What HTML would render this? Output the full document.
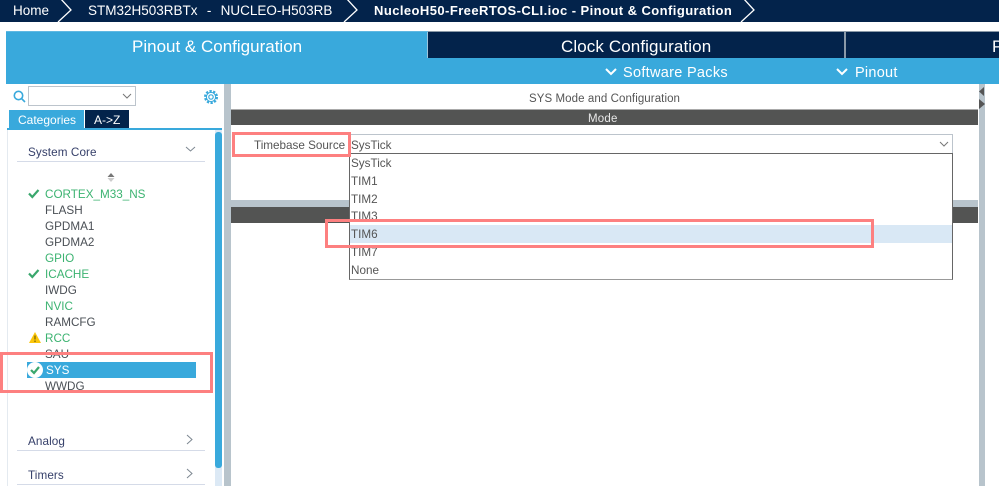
<!DOCTYPE html>
<html><head><meta charset="utf-8"><style>
html,body{margin:0;padding:0;background:#fff}
body{width:999px;height:486px;overflow:hidden;position:relative;font-family:"Liberation Sans",sans-serif}
#w{position:absolute;left:0;top:0;width:999px;height:486px;overflow:hidden;filter:blur(.3px)}
.a{position:absolute}
.t{position:absolute;white-space:nowrap;line-height:16px}
.l{position:absolute;left:45px;font-size:11.7px;line-height:16px;color:#4a4f55;white-space:nowrap}
.g{color:#3cb371}
.o{position:absolute;left:351px;font-size:11.7px;line-height:18px;color:#555;white-space:nowrap}
.r{position:absolute;border:3px solid #fd8080;box-sizing:border-box}
.h{font-size:11.7px;color:#36406a;letter-spacing:.1px}
svg{position:absolute;overflow:visible}
</style></head><body><div id="w">
<div class="a" style="left:0;top:0;width:999px;height:22px;background:#03234b"></div>
<div class="t" style="left:13px;top:3px;font-size:13.5px;color:#fff">Home</div>
<div class="t" style="left:88px;top:3px;font-size:13.5px;color:#fff;word-spacing:.9px">STM32H503RBTx&nbsp; -&nbsp; NUCLEO-H503RB</div>
<div class="t" style="left:374px;top:3px;font-size:13px;color:#fff;font-weight:bold;letter-spacing:.43px">NucleoH50-FreeRTOS-CLI.ioc - Pinout &amp; Configuration</div>
<svg style="left:0;top:0" width="999" height="24" fill="none" stroke="#fff" stroke-width="1.3"><path d="M58 22L71 10L60 -2"/><path d="M344 22L357 10L346 -2"/><path d="M741 22L754 10L743 -2"/></svg>

<div class="a" style="left:6px;top:31px;width:993px;height:53px;background:#39a9dc"></div>
<div class="a" style="left:428px;top:31px;width:571px;height:27px;background:#03234b;border-top:1px solid #8a99a8;box-sizing:border-box"></div>
<div class="a" style="left:427px;top:31px;width:1px;height:27px;background:#9fc6dc"></div>
<div class="a" style="left:844px;top:31px;width:2px;height:27px;background:#8a99a8"></div>
<div class="a" style="left:6px;top:31px;width:422px;height:1px;background:#5fb8e2"></div>
<div class="t" style="left:132px;top:39px;font-size:17px;color:#fff">Pinout &amp; Configuration</div>
<div class="t" style="left:561px;top:39px;font-size:17px;letter-spacing:.1px;color:#fff">Clock Configuration</div>
<div class="t" style="left:992px;top:39px;font-size:17px;color:#fff">P</div>
<div class="t" style="left:623px;top:65px;font-size:14.5px;color:#fff;letter-spacing:.3px">Software Packs</div>
<div class="t" style="left:855px;top:65px;font-size:14.5px;color:#fff;letter-spacing:.25px">Pinout</div>
<svg style="left:0;top:0" width="999" height="90" fill="none" stroke="#fff" stroke-width="2"><path d="M606 69L611 74L616 69"/><path d="M837 69L842 74L847 69"/></svg>

<!-- left panel -->
<svg style="left:13px;top:90px" width="14" height="14" fill="none" stroke="#39a9dc" stroke-width="1.6"><circle cx="5.5" cy="5.5" r="4.2"/><path d="M8.5 8.5L12 12"/></svg>
<div class="a" style="left:28px;top:86px;width:108px;height:20px;border:1px solid #bcc4cc;box-sizing:border-box"></div>
<svg style="left:122px;top:93px" width="12" height="8" fill="none" stroke="#777" stroke-width="1"><path d="M1 1L5 5L9 1"/></svg>
<svg style="left:203px;top:89px" width="16" height="16" fill="none" stroke="#39a9dc"><circle cx="8" cy="8" r="5.7" stroke-width="2.6" stroke-dasharray="2.2 1.4"/><circle cx="8" cy="8" r="4.6" stroke-width="1"/><circle cx="8" cy="8" r="2.2" stroke-width="1.2"/></svg>
<div class="a" style="left:9px;top:110px;width:75px;height:18px;background:#39a9dc"></div>
<div class="a" style="left:85px;top:110px;width:44px;height:18px;background:#03234b"></div>
<div class="t" style="left:18px;top:112px;font-size:12px;color:#fff">Categories</div>
<div class="t" style="left:94px;top:112px;font-size:12px;color:#fff">A-&gt;Z</div>
<div class="a" style="left:7px;top:128px;width:215px;height:2px;background:#39a9dc"></div>
<div class="a" style="left:7px;top:130px;width:1px;height:356px;background:#e4eaf0"></div>
<div class="t h" style="left:28px;top:145px">System Core</div>
<svg style="left:185px;top:146px" width="12" height="8" fill="none" stroke="#7d8791" stroke-width="1"><path d="M1 1L5.5 5L10 1"/></svg>
<div class="a" style="left:17px;top:161px;width:188px;height:1px;background:#d5dbe8"></div>
<svg style="left:107px;top:173px" width="8" height="10"><path d="M4 0L7.5 4H.5Z" fill="#777"/><path d="M4 9L7.5 5H.5Z" fill="#ccc"/></svg>
<svg style="left:28px;top:188px" width="12" height="12" fill="none" stroke="#3aa76d" stroke-width="2.2"><path d="M1 5.5L4.3 9L10.5 2"/></svg>
<svg style="left:28px;top:268px" width="12" height="12" fill="none" stroke="#3aa76d" stroke-width="2.2"><path d="M1 5.5L4.3 9L10.5 2"/></svg>
<div class="l g" style="top:187px">CORTEX_M33_NS</div>
<div class="l" style="top:203px">FLASH</div>
<div class="l" style="top:219px">GPDMA1</div>
<div class="l" style="top:235px">GPDMA2</div>
<div class="l g" style="top:251px">GPIO</div>
<div class="l g" style="top:267px">ICACHE</div>
<div class="l" style="top:283px">IWDG</div>
<div class="l g" style="top:299px">NVIC</div>
<div class="l" style="top:315px">RAMCFG</div>
<svg style="left:29px;top:332px" width="12" height="11"><path d="M6 0L12 11H0Z" fill="#fbc60a"/><path d="M6 3.5V7.5M6 8.5V10" stroke="#5a4a00" stroke-width="1"/></svg>
<div class="l g" style="top:331px">RCC</div>
<div class="l" style="top:347px">SAU</div>
<div class="a" style="left:27px;top:362px;width:169px;height:16px;background:#39a9dc"></div>
<svg style="left:27px;top:362px" width="16" height="16" fill="none"><circle cx="8" cy="8" r="8" fill="#fff"/><path d="M4 8L7 11L12 5" stroke="#3aa76d" stroke-width="2.2"/></svg>
<div class="l" style="top:363px;left:46px;color:#fff">SYS</div>
<div class="l" style="top:379px">WWDG</div>
<div class="t h" style="left:28px;top:434px">Analog</div>
<svg style="left:186px;top:434px" width="8" height="12" fill="none" stroke="#7d8791" stroke-width="1"><path d="M1 1L6 5.5L1 10"/></svg>
<div class="a" style="left:17px;top:450px;width:188px;height:1px;background:#d5dbe8"></div>
<div class="t h" style="left:28px;top:468px">Timers</div>
<svg style="left:186px;top:468px" width="8" height="12" fill="none" stroke="#7d8791" stroke-width="1"><path d="M1 1L6 5.5L1 10"/></svg>
<div class="a" style="left:17px;top:484px;width:188px;height:1px;background:#d5dbe8"></div>
<div class="a" style="left:215px;top:130px;width:7px;height:356px;background:#dce9f5"></div>
<div class="a" style="left:215px;top:132px;width:7px;height:336px;background:#39a9dc;border-radius:3px"></div>
<div class="a" style="left:224px;top:84px;width:7px;height:402px;background:#b8c4cc"></div>

<!-- right -->
<div class="a" style="left:979px;top:84px;width:6px;height:402px;background:#b8c4cc"></div>
<svg style="left:979px;top:86px" width="6" height="24"><path d="M5 1V10L0 5.5Z" fill="#555"/><path d="M0 13V23L6 18Z" fill="#555"/></svg>
<div class="t" style="left:529px;top:91px;font-size:11.5px;color:#555;letter-spacing:.08px">SYS Mode and Configuration</div>
<div class="a" style="left:231px;top:109px;width:747px;height:16px;background:#535453;border-top:1px solid #aaa;box-sizing:border-box"></div>
<div class="t" style="left:588px;top:111px;font-size:11.5px;color:#e8e8e8;letter-spacing:.2px">Mode</div>
<div class="t" style="left:254px;top:138px;font-size:11.7px;color:#555">Timebase Source</div>
<div class="a" style="left:349px;top:134px;width:604px;height:20px;border:1px solid #bcc4cc;box-sizing:border-box"></div>
<div class="t" style="left:351px;top:138px;font-size:11.7px;color:#555">SysTick</div>
<svg style="left:939px;top:141px" width="12" height="8" fill="none" stroke="#777" stroke-width="1"><path d="M1 1L5 5L9 1"/></svg>
<div class="a" style="left:231px;top:200px;width:747px;height:7px;background:#b8c4cc"></div>
<div class="a" style="left:231px;top:207px;width:747px;height:16px;background:#535453"></div>
<div class="a" style="left:349px;top:153px;width:604px;height:127px;background:#fff;border:1px solid #666;border-bottom-color:#999;box-sizing:border-box"></div>
<div class="a" style="left:350px;top:225px;width:602px;height:18px;background:#d9e8f5"></div>
<div class="o" style="top:155px">SysTick</div>
<div class="o" style="top:173px">TIM1</div>
<div class="o" style="top:191px">TIM2</div>
<div class="o" style="top:208px">TIM3</div>
<div class="o" style="top:226px">TIM6</div>
<div class="o" style="top:244px">TIM7</div>
<div class="o" style="top:262px">None</div>

<!-- red annotation boxes -->
<div class="r" style="left:232px;top:132px;width:119px;height:25px"></div>
<div class="r" style="left:325px;top:219px;width:549px;height:29px"></div>
<div class="r" style="left:0;top:352px;width:213px;height:41px"></div>
</div></body></html>
